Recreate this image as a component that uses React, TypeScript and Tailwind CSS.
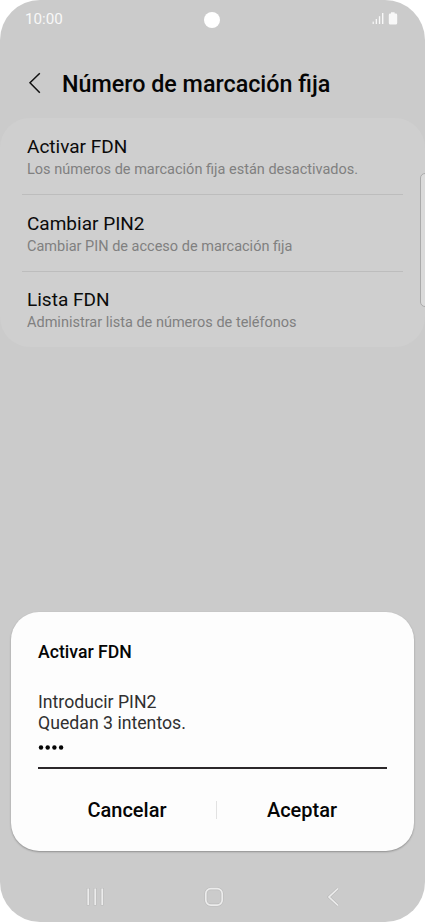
import React from "react";

type Setting = { title: string; detail: string };

const settings: Setting[] = [
  { title: "Activar FDN", detail: "Los números de marcación fija están desactivados." },
  { title: "Cambiar PIN2", detail: "Cambiar PIN de acceso de marcación fija" },
  { title: "Lista FDN", detail: "Administrar lista de números de teléfonos" },
];

function StatusBar() {
  return (
    <div className="flex h-[38px] shrink-0 items-center pl-[25px] pr-[27px] text-[#f8f8f8]">
      <span className="w-[179px] text-[15.2px] leading-[38px]">10:00</span>
      <span className="mt-[2px] size-[16px] rounded-full bg-white" />
      <svg className="ml-auto h-[14px] w-[28px]" viewBox="0 0 28 14" fill="#f8f8f8">
        <rect x="2.6" y="9.6" width="1.2" height="2.4" />
        <rect x="5.7" y="7" width="1.3" height="5" />
        <rect x="8.9" y="4.2" width="1.3" height="7.8" />
        <rect x="12" y="1" width="1.4" height="11" />
        <path d="M21 .3h3.600v1.200h1.200q1.400 0 1.400 1.400v8.100q0 1.600-1.600 1.600h-5.200q-1.600 0-1.600-1.600V2.900q0-1.400 1.400-1.400H21z" />
      </svg>
    </div>
  );
}

function SettingRow({ title, detail }: Setting) {
  return (
    <div className="mx-[22px] h-[76px] border-t border-[#bdbdbd] pl-[5px] pt-[16px] first:border-transparent even:h-[77px] even:pt-[17px]">
      <div className="text-[19px] leading-[24px] text-[#0b0b0b]">{title}</div>
      <div className="mt-px whitespace-nowrap text-[14.5px] leading-[20px] text-[#808080]">{detail}</div>
    </div>
  );
}

function PinDialog() {
  return (
    <div className="mx-[11px] mt-[265px] flex h-[239px] w-[403px] shrink-0 flex-col rounded-[28px] bg-[#fdfdfd] px-[27px] pt-[28px] shadow-[0_1px_2px_rgba(0,0,0,0.3)]">
      <h2 className="text-[17.650px] font-medium leading-[24px] text-[#050505]">Activar FDN</h2>
      <p className="mt-[28px] text-[17.700px] leading-[21px] text-[#303030]">
        Introducir PIN2
        <br />
        Quedan 3 intentos.
      </p>
      <svg className="mt-[11px] h-[5px] w-[28px] shrink-0" viewBox="0 0 28 5" fill="#050505">
        {[3, 9.7, 16.4, 23.1].map((cx) => (
          <circle key={cx} cx={cx} cy="2.500" r="2.200" />
        ))}
      </svg>
      <div className="mt-[17px] h-[2px] w-[349px] shrink-0 bg-[#2c282a]" />
      <div className="mt-[31px] flex h-[20px] items-center text-[20px] font-medium leading-[20px] text-[#050505]">
        <button className="w-[178px] shrink-0 text-center">Cancelar</button>
        <span className="h-[18px] w-px shrink-0 bg-[#e2e2e2]" />
        <button className="w-[170px] shrink-0 text-center">Aceptar</button>
      </div>
    </div>
  );
}

function NavigationBar() {
  return (
    <svg className="mt-[34px] h-[24px] w-[425px] shrink-0" viewBox="0 0 425 24" fill="none">
      <g stroke="#bcbcbc" strokeWidth="3">
        <path d="M88.200 3v17.500M95.200 3v17.500M102.200 3v17.500" />
        <rect x="205.800" y="3.700" width="16.400" height="16.400" rx="5" />
        <path d="M338 3.500l-9 8.500 9 8.500" />
      </g>
      <g stroke="#ececec" strokeWidth="1.700">
        <path d="M88.200 3.500v16.500M95.200 3.500v16.500M102.200 3.500v16.500" />
        <rect x="205.800" y="3.700" width="16.400" height="16.400" rx="5" />
        <path d="M338 3.500l-9 8.500 9 8.500" />
      </g>
    </svg>
  );
}

export default function App() {
  return (
    <div className="h-[922px] w-[425px] bg-white font-['Roboto',sans-serif]">
      <div className="relative flex h-full flex-col overflow-hidden rounded-[40px] bg-[#cbcbcb]">
        <StatusBar />
        <header className="flex h-[80px] shrink-0 items-center pl-[28px] pt-[9px]">
          <svg className="h-[24px] w-[14px]" viewBox="0 0 14 24" fill="none">
            <path d="M11.800 2.300L2 11.800l9.800 9.900" stroke="#111" strokeWidth="1.500" />
          </svg>
          <h1 className="ml-[20px] mt-[2px] whitespace-nowrap text-[23.300px] font-medium leading-[30px] text-[#050505]">
            Número de marcación fija
          </h1>
        </header>
        <main className="h-[229px] shrink-0 rounded-[30px] bg-[#cfcfcf]">
          {settings.map((s) => (
            <SettingRow key={s.title} {...s} />
          ))}
        </main>
        <PinDialog />
        <NavigationBar />
        <span className="absolute left-[420px] top-[173px] h-[134px] w-[12px] rounded-[5px] border border-[#aaa] bg-[#dadada]" />
      </div>
    </div>
  );
}
